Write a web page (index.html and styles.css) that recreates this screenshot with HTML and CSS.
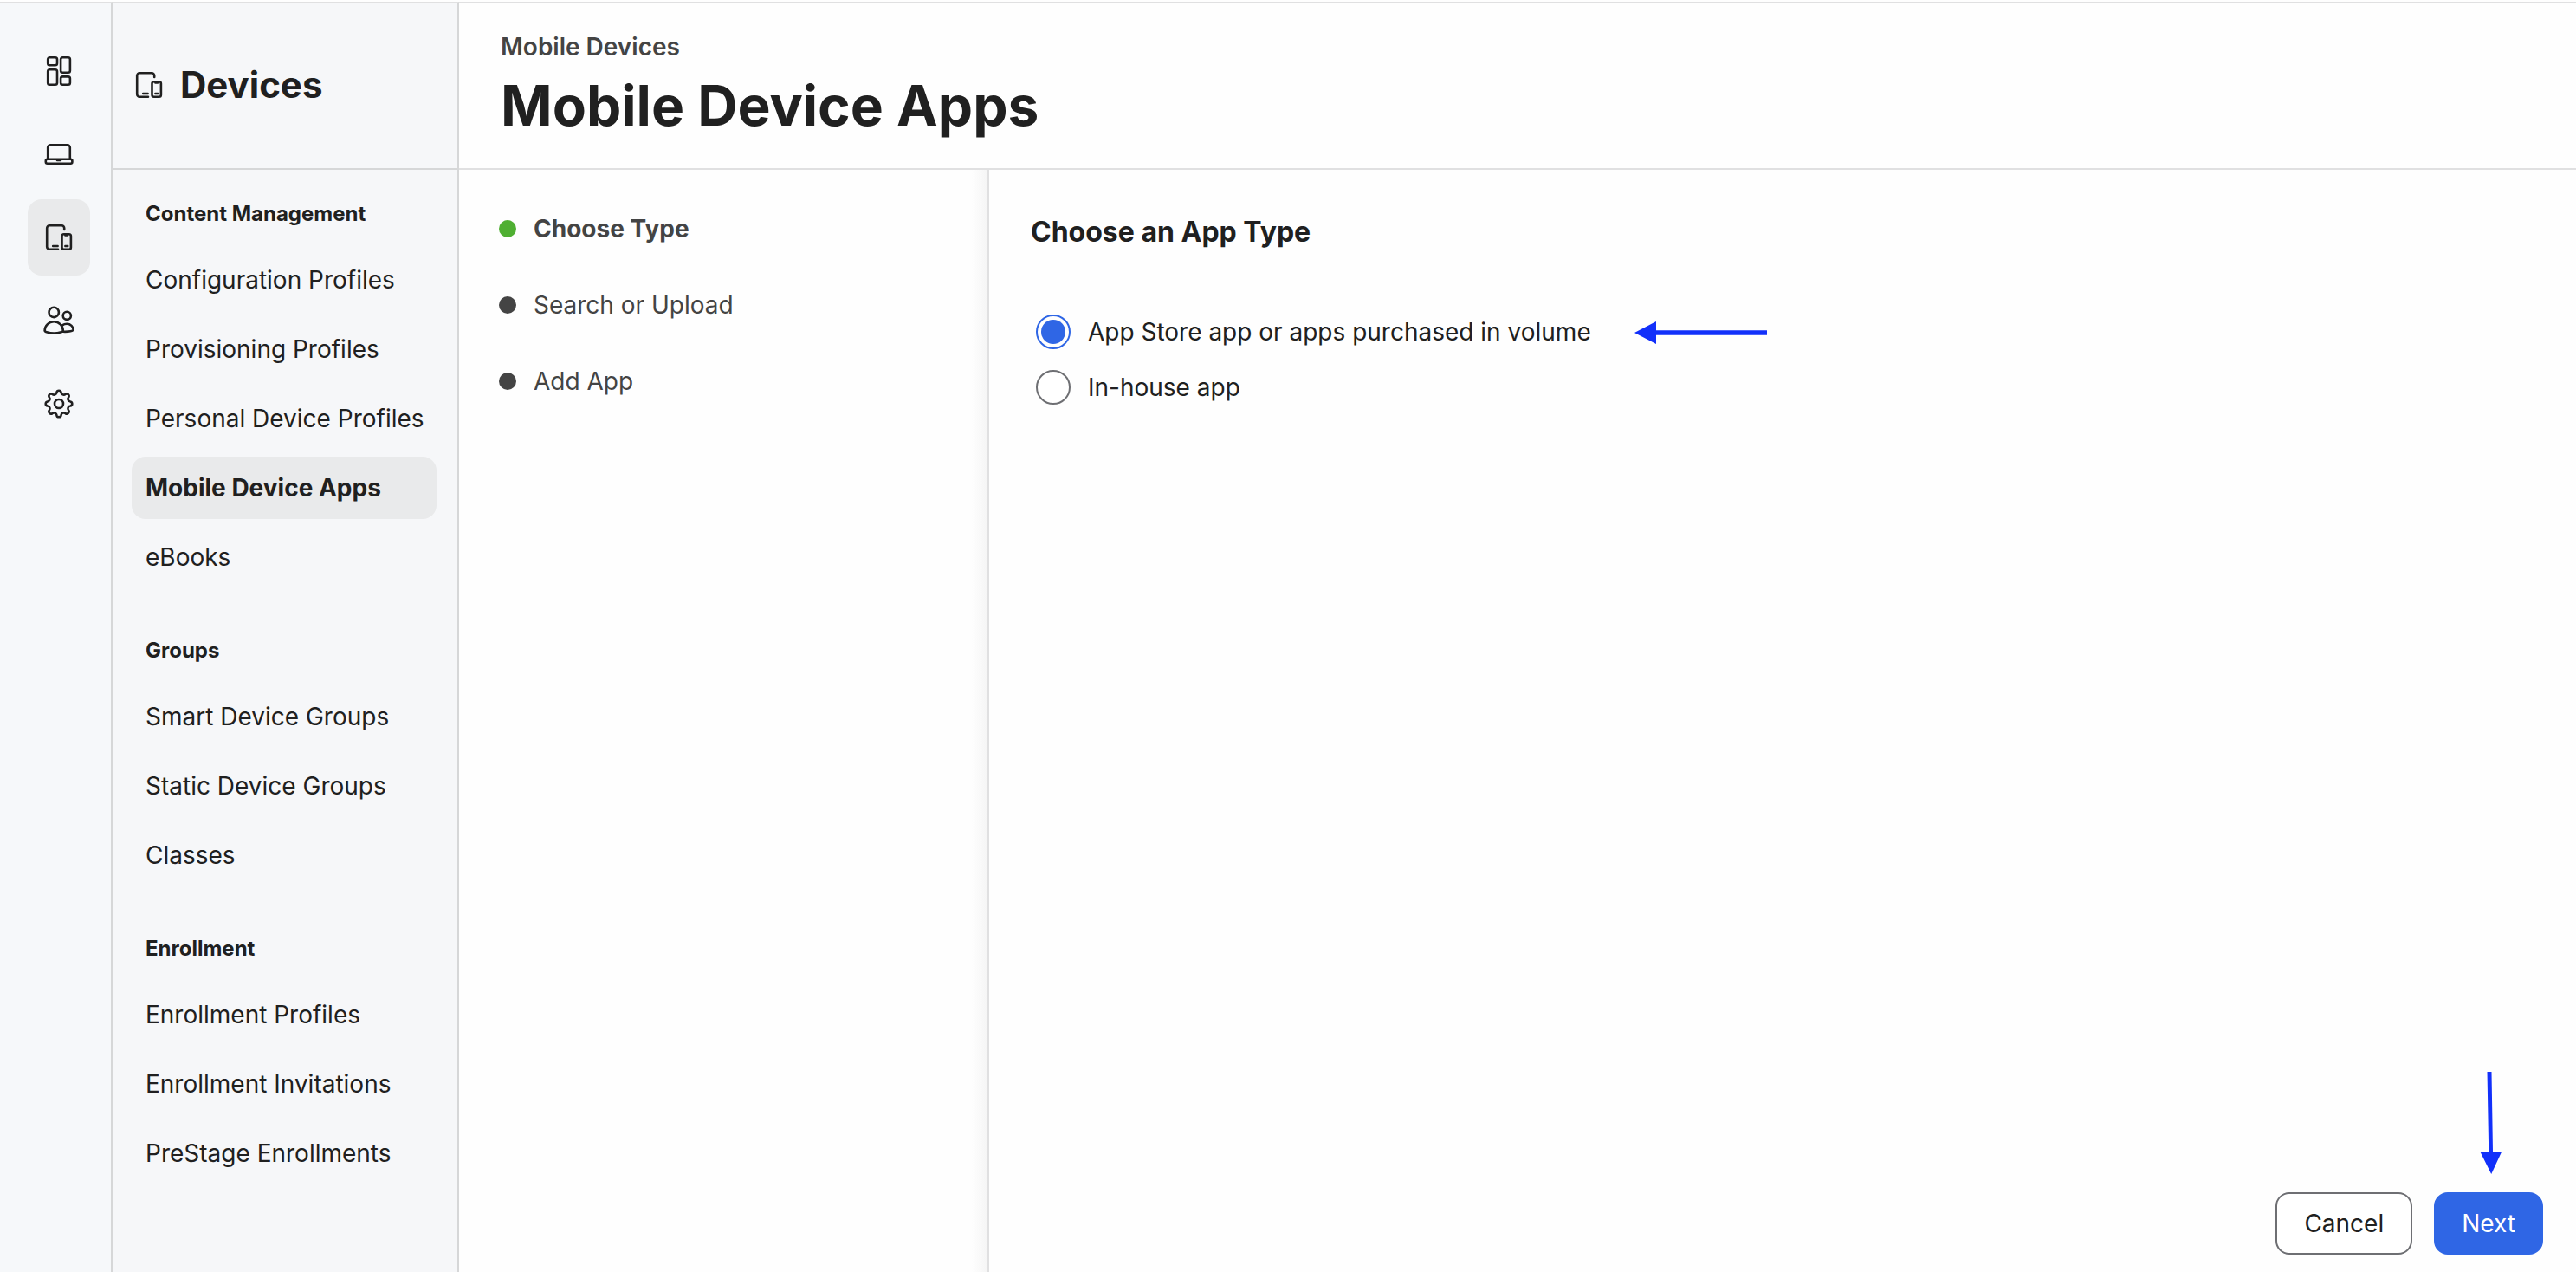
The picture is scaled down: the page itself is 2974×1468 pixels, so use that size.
FILE: index.html
```html
<!DOCTYPE html>
<html lang="en">
<head>
<meta charset="utf-8">
<title>Mobile Device Apps</title>
<link rel="stylesheet" href="styles.css">
</head>
<body>
<svg class="sprite" aria-hidden="true">
  <symbol id="devices" viewBox="0 0 40 40">
    <path d="M26.2 11V9.2a3 3 0 0 0-3-3H9.2a3 3 0 0 0-3 3v21.6a3 3 0 0 0 3 3H19M13.2 30h5.4"/>
    <rect x="23.5" y="16.2" width="10.4" height="17.6" rx="2.2"/>
    <path d="M27.4 17.4h2.6M27.4 30h2.8"/>
  </symbol>
</svg>
<div class="app">
  <nav class="rail" aria-label="Main">
    <a class="rail-link" href="#dashboard" aria-label="Dashboard">
      <svg class="icon" viewBox="0 0 40 40"><rect x="7.2" y="4.2" width="10.8" height="9" rx="2.2"/><rect x="7.2" y="18.2" width="10.8" height="17.6" rx="2.2"/><rect x="22.1" y="4.2" width="10.8" height="17.6" rx="2.2"/><rect x="22.1" y="26.4" width="10.8" height="9.4" rx="2.2"/></svg>
    </a>
    <a class="rail-link" href="#computers" aria-label="Computers">
      <svg class="icon" viewBox="0 0 40 40"><path d="M7.2 25.6V12.2a3 3 0 0 1 3-3h19.6a3 3 0 0 1 3 3v13.4M18 27h4"/><rect x="4.8" y="25.8" width="30.6" height="5" rx="2"/></svg>
    </a>
    <a class="rail-link rail-link-active" href="#devices-section" aria-label="Devices" aria-current="true">
      <svg class="icon"><use href="#devices"/></svg>
    </a>
    <a class="rail-link" href="#users" aria-label="Users">
      <svg class="icon" viewBox="0 0 40 40"><circle cx="14.2" cy="10.4" r="5.7"/><circle cx="29.3" cy="14.3" r="4.6"/><path d="M14.2 21.2c6 0 10.6 4.9 10.6 10.2 0 1.6-4.8 3.1-10.6 3.1S3.6 33 3.6 31.4c0-5.3 4.6-10.2 10.6-10.2zM24 25.4c1.4-1 3.2-1.6 5.2-1.6 4.4 0 7.4 3.2 7.4 6.8 0 1.5-4.6 2.4-11.6 2.2"/></svg>
    </a>
    <a class="rail-link" href="#settings" aria-label="Settings">
      <svg class="icon" viewBox="0 0 40 40"><circle cx="20" cy="20" r="5"/><path d="M33.15 17.44A2.6 2.6 0 0 1 33.15 22.56A3 3 0 0 0 31.11 27.49A2.6 2.6 0 0 1 27.49 31.11A3 3 0 0 0 22.56 33.15A2.6 2.6 0 0 1 17.44 33.15A3 3 0 0 0 12.51 31.11A2.6 2.6 0 0 1 8.89 27.49A3 3 0 0 0 6.85 22.56A2.6 2.6 0 0 1 6.85 17.44A3 3 0 0 0 8.89 12.51A2.6 2.6 0 0 1 12.51 8.89A3 3 0 0 0 17.44 6.85A2.6 2.6 0 0 1 22.56 6.85A3 3 0 0 0 27.49 8.89A2.6 2.6 0 0 1 31.11 12.51A3 3 0 0 0 33.15 17.44z"/></svg>
    </a>
  </nav>

  <aside class="sidebar">
    <div class="sidebar-header">
      <svg class="icon" aria-hidden="true"><use href="#devices"/></svg>
      <h2 class="sidebar-title">Devices</h2>
    </div>
    <nav class="menu" aria-label="Devices">
      <section class="menu-group">
        <h3 class="menu-heading">Content Management</h3>
        <a class="menu-link" href="#configuration">Configuration Profiles</a>
        <a class="menu-link" href="#provisioning">Provisioning Profiles</a>
        <a class="menu-link" href="#personal">Personal Device Profiles</a>
        <a class="menu-link menu-link-active" href="#apps" aria-current="page">Mobile Device Apps</a>
        <a class="menu-link" href="#ebooks">eBooks</a>
      </section>
      <section class="menu-group">
        <h3 class="menu-heading">Groups</h3>
        <a class="menu-link" href="#smart-groups">Smart Device Groups</a>
        <a class="menu-link" href="#static-groups">Static Device Groups</a>
        <a class="menu-link" href="#classes">Classes</a>
      </section>
      <section class="menu-group">
        <h3 class="menu-heading">Enrollment</h3>
        <a class="menu-link" href="#enrollment-profiles">Enrollment Profiles</a>
        <a class="menu-link" href="#enrollment-invitations">Enrollment Invitations</a>
        <a class="menu-link" href="#prestage">PreStage Enrollments</a>
      </section>
    </nav>
  </aside>

  <main class="main">
    <header class="page-header">
      <a class="breadcrumb" href="#mobile-devices">Mobile Devices</a>
      <h1 class="page-title">Mobile Device Apps</h1>
    </header>
    <div class="wizard">
      <ol class="steps">
        <li class="step step-current" aria-current="step">Choose Type</li>
        <li class="step">Search or Upload</li>
        <li class="step">Add App</li>
      </ol>
      <form class="panel">
        <h2 class="panel-title" id="app-type">Choose an App Type</h2>
        <div class="options" role="radiogroup" aria-labelledby="app-type">
          <div class="option">
            <input class="radio" type="radio" name="type" id="store" checked>
            <label for="store">App Store app or apps purchased in volume</label>
            <svg class="pointer pointer-left" viewBox="0 0 153 26" aria-hidden="true"><path d="M0 13L25 0v10.2h128v5.6H25V26z"/></svg>
          </div>
          <div class="option">
            <input class="radio" type="radio" name="type" id="inhouse">
            <label for="inhouse">In-house app</label>
          </div>
        </div>
        <div class="actions">
          <button class="button" type="button">Cancel</button>
          <div class="action">
            <button class="button button-primary" type="submit">Next</button>
            <svg class="pointer pointer-down" viewBox="0 0 26 118" aria-hidden="true"><path d="M8.5 0h5l1.5 92h10.3L13.2 118 .5 92.5h9.7z"/></svg>
          </div>
        </div>
      </form>
    </div>
  </main>
</div>
</body>
</html>
```
FILE: styles.css
```css
* {
  box-sizing: border-box;
}

body {
  margin: 0;
  background: #fefefe;
  color: #202020;
  font: 400 28px/36px Inter, "Liberation Sans", sans-serif;
}

h1, h2, h3, ol {
  margin: 0;
  padding: 0;
}

a {
  color: inherit;
  text-decoration: none;
}

.sprite {
  display: none;
}

.app {
  display: flex;
  min-height: 100vh;
  padding-top: 2px;
}

.icon {
  flex: none;
  width: 40px;
  height: 40px;
  fill: none;
  stroke: #202020;
  stroke-width: 2.6;
  stroke-linecap: round;
  stroke-linejoin: round;
}

/* Icon rail */
.rail {
  flex: none;
  display: flex;
  flex-direction: column;
  align-items: center;
  gap: 8px;
  width: 130px;
  padding: 34px 24px 34px 32px;
  border-top: 2px solid #e0e0e1;
  border-right: 2px solid #d6d7d8;
  background: #f6f8fa;
}

.rail-link {
  display: flex;
  align-items: center;
  justify-content: center;
  width: 72px;
  height: 88px;
  border-radius: 16px;
}

.rail-link-active,
.menu-link-active {
  background: #e9eaeb;
}

/* Section sidebar */
.sidebar {
  flex: none;
  width: 400px;
  border-top: 2px solid #e0e0e1;
  border-right: 2px solid #d6d7d8;
  background: #f6f7f9;
}

.sidebar-header {
  display: flex;
  align-items: center;
  gap: 16px;
  height: 192px;
  padding: 0 22px 2px;
  border-bottom: 2px solid #d6d7d8;
}

.sidebar-title {
  font-size: 42px;
  font-weight: 700;
  line-height: 52px;
}

.menu {
  display: flex;
  flex-direction: column;
  gap: 54px;
  padding: 33px 24px 32px 22px;
}

.menu-group {
  display: flex;
  flex-direction: column;
  gap: 8px;
}

.menu-heading {
  padding: 0 16px 14px;
  font-size: 24px;
  font-weight: 700;
  line-height: 36px;
}

.menu-link {
  padding: 18px 16px;
  border-radius: 16px;
  white-space: nowrap;
}

.menu-link-active {
  font-weight: 700;
}

/* Main area */
.main {
  flex: 1;
  display: flex;
  flex-direction: column;
  min-width: 0;
  border-top: 2px solid #e0e0e1;
}

.page-header {
  display: flex;
  flex-direction: column;
  align-items: flex-start;
  gap: 10px;
  padding: 32px 48px;
  border-bottom: 2px solid #e0e0e1;
}

.breadcrumb {
  color: #444;
  font-weight: 600;
}

.page-title {
  font-size: 64px;
  font-weight: 700;
  line-height: 80px;
}

.wizard {
  flex: 1;
  display: flex;
}

.steps {
  flex: none;
  display: flex;
  flex-direction: column;
  gap: 52px;
  width: 610px;
  padding: 50px 46px;
  background: linear-gradient(to left, #f5f5f5, #fefefe 18px);
  list-style: none;
  color: #444;
}

.step {
  display: flex;
  align-items: center;
  gap: 20px;
}

.step::before {
  content: "";
  width: 20px;
  height: 20px;
  border-radius: 50%;
  background: #444;
}

.step-current {
  font-weight: 700;
}

.step-current::before {
  background: #4faf32;
}

.panel {
  flex: 1;
  display: flex;
  flex-direction: column;
  padding: 50px 38px 20px 48px;
  border-left: 2px solid #e0e0e1;
}

.panel-title {
  font-size: 32px;
  font-weight: 700;
  line-height: 44px;
}

.options {
  display: flex;
  flex-direction: column;
  align-items: flex-start;
  gap: 24px;
  padding: 73px 6px;
}

.option {
  position: relative;
  display: flex;
  align-items: center;
  gap: 20px;
  height: 40px;
}

.radio {
  appearance: none;
  width: 40px;
  height: 40px;
  margin: 0;
  border: 2px solid #6e6f73;
  border-radius: 50%;
  background: #fff;
}

.radio:checked {
  padding: 4px;
  border-color: #2f66e5;
  background: #2f66e5 content-box;
}

.actions {
  display: flex;
  justify-content: flex-end;
  gap: 25px;
  margin-top: auto;
}

.action {
  position: relative;
}

.button {
  height: 72px;
  padding: 0 31px;
  border: 2px solid #6e6f73;
  border-radius: 16px;
  background: #fff;
  color: inherit;
  font: inherit;
}

.button-primary {
  padding: 0 30px;
  border-color: #2f66e5;
  background: #2f66e5;
  color: #fff;
}

/* Annotation arrows */
.pointer {
  position: absolute;
  fill: #1230fa;
}

.pointer-left {
  left: 100%;
  top: 8px;
  width: 153px;
  height: 26px;
  margin-left: 50px;
}

.pointer-down {
  bottom: 100%;
  left: 50%;
  width: 26px;
  height: 118px;
  margin: 0 0 21px -10px;
}
```
